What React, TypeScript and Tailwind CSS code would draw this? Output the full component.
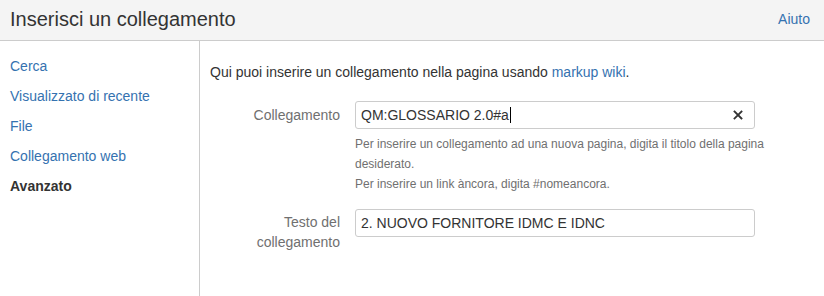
import React from "react";

export default function App() {
  const font = { fontFamily: '"Liberation Sans", Arial, sans-serif' };
  return (
    <div className="w-[824px] h-[296px] bg-white text-[#333] overflow-hidden" style={font}>
      <div className="h-[41px] bg-[#f4f4f4] border-b border-[#cccccc] flex items-center justify-between pl-[10px] pr-[14px]">
        <h1 className="text-[20px] leading-[24px] font-normal text-[#333] -mt-[3px]">Inserisci un collegamento</h1>
        <a className="text-[14px] leading-[20px] text-[#3572b0] -mt-[3px]">Aiuto</a>
      </div>
      <div className="flex h-[255px]">
        <div className="w-[200px] border-r border-[#cccccc] pt-[10px] flex flex-col text-[14px] leading-[20px]">
          <a className="px-[10px] py-[5px] text-[#3572b0]">Cerca</a>
          <a className="px-[10px] py-[5px] text-[#3572b0]">Visualizzato di recente</a>
          <a className="px-[10px] py-[5px] text-[#3572b0]">File</a>
          <a className="px-[10px] py-[5px] text-[#3572b0]">Collegamento web</a>
          <span className="px-[10px] py-[5px] font-bold text-[#333]">Avanzato</span>
        </div>
        <div className="flex-1 pl-[10px] pt-[21px] text-[14px] leading-[20px]">
          <p>
            Qui puoi inserire un collegamento nella pagina usando{" "}
            <a className="text-[#3572b0]">markup wiki</a>.
          </p>
          <div className="flex mt-[19px]">
            <label className="w-[130px] text-right text-[#707070] pt-[4px]">Collegamento</label>
            <div className="ml-[15px] w-[400px]">
              <div className="h-[28px] border border-[#cccccc] rounded-[3px] flex items-center pl-[5px] pr-[10px]">
                <span className="flex-1 text-[#333] flex items-center">
                  QM:GLOSSARIO 2.0#a<span className="inline-block w-px h-[16px] bg-black ml-px" />
                </span>
                <svg width="10" height="10" viewBox="0 0 10 10" className="mr-[1px]">
                  <path d="M1.5 1.5 L8.5 8.5 M8.5 1.5 L1.5 8.5" stroke="#333" strokeWidth="1.8" strokeLinecap="square" />
                </svg>
              </div>
              <div className="mt-[5px] w-[440px] text-[12px] leading-[20px] text-[#707070]">
                Per inserire un collegamento ad una nuova pagina, digita il titolo della pagina
                <br />
                desiderato.
                <br />
                Per inserire un link àncora, digita #nomeancora.
              </div>
            </div>
          </div>
          <div className="flex mt-[15px]">
            <label className="w-[130px] text-right text-[#707070] pt-[3px] leading-[20px]">
              Testo del
              <br />
              collegamento
            </label>
            <div className="ml-[15px] w-[400px]">
              <div className="h-[28px] border border-[#cccccc] rounded-[3px] flex items-center pl-[5px]">
                <span className="text-[#333]">2. NUOVO FORNITORE IDMC E IDNC</span>
              </div>
            </div>
          </div>
        </div>
      </div>
    </div>
  );
}
